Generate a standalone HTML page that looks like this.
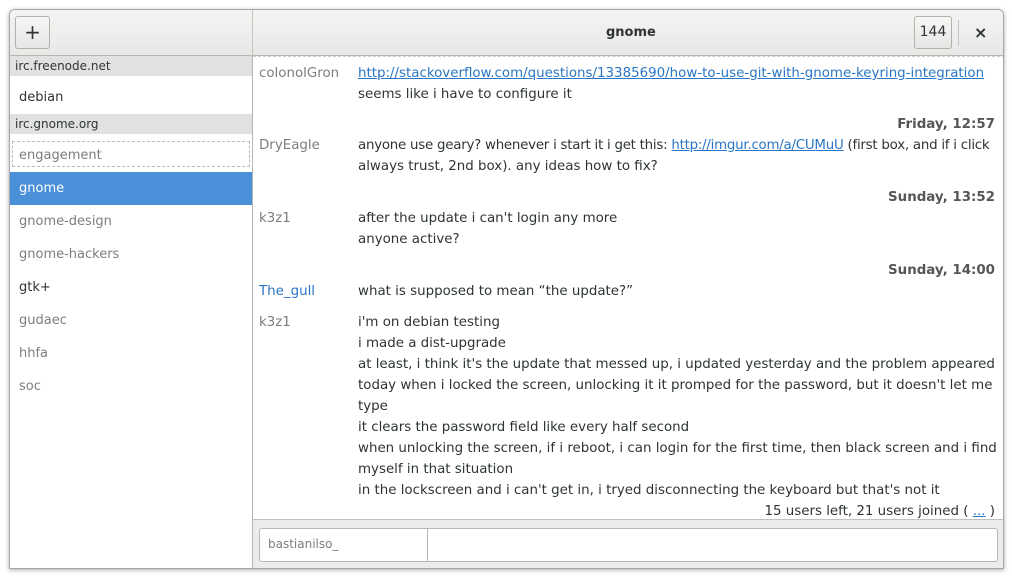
<!DOCTYPE html>
<html><head><meta charset="utf-8"><style>
*{margin:0;padding:0;box-sizing:border-box}
body{width:1012px;height:577px;background:#fff;position:relative;overflow:hidden;font-family:"DejaVu Sans","Liberation Sans",sans-serif;font-size:13px;color:#2e3436}
.win{position:absolute;left:9px;top:9px;width:995px;height:560px;border:1px solid #a5a8a8;border-radius:6px 6px 0 0;background:#fff;box-shadow:0 1px 4px rgba(0,0,0,.35);overflow:hidden}
.hdr{position:absolute;left:0;top:0;width:100%;height:46px;background:linear-gradient(#f4f4f3,#e8e8e7);border-bottom:1px solid #b6b6b3}
.btn{position:absolute;border:1px solid #b0b2ae;border-radius:3px;background:linear-gradient(#f6f6f5,#e6e6e4);text-align:center}
.vsep{position:absolute;width:1px;background:#c4c4c1}
.side{position:absolute;left:0;top:46px;width:243px;height:514px;border-right:1px solid #b6b6b3;background:#fff}
.t{position:absolute;white-space:nowrap}
.m{font-size:13.4px}
.sh{position:absolute;left:0;width:242px;height:20px;background:#e1e1e1;font-size:12px;padding:3px 0 0 5px}
.nick{color:#7d7f7a}
a{color:#2a76c6;text-decoration:underline}
.ts{position:absolute;right:8px;font-weight:bold;color:#555753;white-space:nowrap;font-size:13.4px}
</style></head><body>
<div class="win">
 <div class="hdr">
  <div class="btn" style="left:5px;top:6px;width:35px;height:33px;font-size:20px;line-height:30px">+</div>
  <div class="vsep" style="left:242px;top:0;height:46px"></div>
  <div class="t" style="left:596px;top:15px;font-weight:bold">gnome</div>
  <div class="btn" style="left:904px;top:6px;width:38px;height:33px;line-height:31px;font-size:14px">144</div>
  <div class="vsep" style="left:948px;top:10px;height:26px"></div>
  <div class="t" style="left:964px;top:13px;font-size:16px;font-weight:bold">×</div>
 </div>
 <div class="side">
  <div class="sh" style="top:0">irc.freenode.net</div>
  <div class="t" style="left:9px;top:34px">debian</div>
  <div class="sh" style="top:58px">irc.gnome.org</div>
  <div style="position:absolute;left:2px;top:85px;width:238px;height:26px;border:1px dashed #bbb"></div>
  <div class="t nick" style="left:9px;top:92px">engagement</div>
  <div style="position:absolute;left:0;top:116px;width:242px;height:33px;background:#4a90d9"></div>
  <div class="t" style="left:9px;top:125px;color:#fff">gnome</div>
  <div class="t nick" style="left:9px;top:158px">gnome-design</div>
  <div class="t nick" style="left:9px;top:191px">gnome-hackers</div>
  <div class="t" style="left:9px;top:224px">gtk+</div>
  <div class="t nick" style="left:9px;top:257px">gudaec</div>
  <div class="t nick" style="left:9px;top:290px">hhfa</div>
  <div class="t nick" style="left:9px;top:323px">soc</div>
 </div>
 <div style="position:absolute;left:243px;top:46px;width:752px;height:1px;border-top:1px dashed #ccc"></div>
 <div class="m">
 <div class="t nick" style="left:249px;top:56px">colonolGron</div>
 <div class="t" style="left:348px;top:56px"><a>http://stackoverflow.com/questions/13385690/how-to-use-git-with-gnome-keyring-integration</a></div>
 <div class="t" style="left:348px;top:77px">seems like i have to configure it</div>
 <div class="ts" style="top:107px">Friday, 12:57</div>
 <div class="t nick" style="left:249px;top:128px">DryEagle</div>
 <div class="t" style="left:348px;top:128px;letter-spacing:-0.25px">anyone use geary? whenever i start it i get this: <a>http://imgur.com/a/CUMuU</a> (first box, and if i click</div>
 <div class="t" style="left:348px;top:149px">always trust, 2nd box). any ideas how to fix?</div>
 <div class="ts" style="top:180px">Sunday, 13:52</div>
 <div class="t nick" style="left:249px;top:201px">k3z1</div>
 <div class="t" style="left:348px;top:201px">after the update i can't login any more</div>
 <div class="t" style="left:348px;top:222px">anyone active?</div>
 <div class="ts" style="top:253px">Sunday, 14:00</div>
 <div class="t" style="left:249px;top:274px;color:#2a76c6">The_gull</div>
 <div class="t" style="left:348px;top:274px">what is supposed to mean “the update?”</div>
 <div class="t nick" style="left:249px;top:305px">k3z1</div>
 <div class="t" style="left:348px;top:305px">i'm on debian testing</div>
 <div class="t" style="left:348px;top:326px">i made a dist-upgrade</div>
 <div class="t" style="left:348px;top:347px">at least, i think it's the update that messed up, i updated yesterday and the problem appeared</div>
 <div class="t" style="left:348px;top:368px">today when i locked the screen, unlocking it it promped for the password, but it doesn't let me</div>
 <div class="t" style="left:348px;top:389px">type</div>
 <div class="t" style="left:348px;top:410px">it clears the password field like every half second</div>
 <div class="t" style="left:348px;top:431px">when unlocking the screen, if i reboot, i can login for the first time, then black screen and i find</div>
 <div class="t" style="left:348px;top:452px">myself in that situation</div>
 <div class="t" style="left:348px;top:473px">in the lockscreen and i can't get in, i tryed disconnecting the keyboard but that's not it</div>
 <div class="t" style="right:8px;top:494px">15 users left, 21 users joined ( <a>...</a> )</div>
 </div>
 <div style="position:absolute;left:243px;top:509px;width:752px;height:51px;background:#ececeb;border-top:1px solid #c0c0bd"></div>
 <div style="position:absolute;left:249px;top:518px;width:739px;height:34px;border:1px solid #b6b6b3;border-radius:3px;background:#fff"></div>
 <div class="vsep" style="left:417px;top:519px;height:32px;background:#b6b6b3"></div>
 <div class="t nick" style="left:258px;top:527px;font-size:12px">bastianilso_</div>
</div>
</body></html>
